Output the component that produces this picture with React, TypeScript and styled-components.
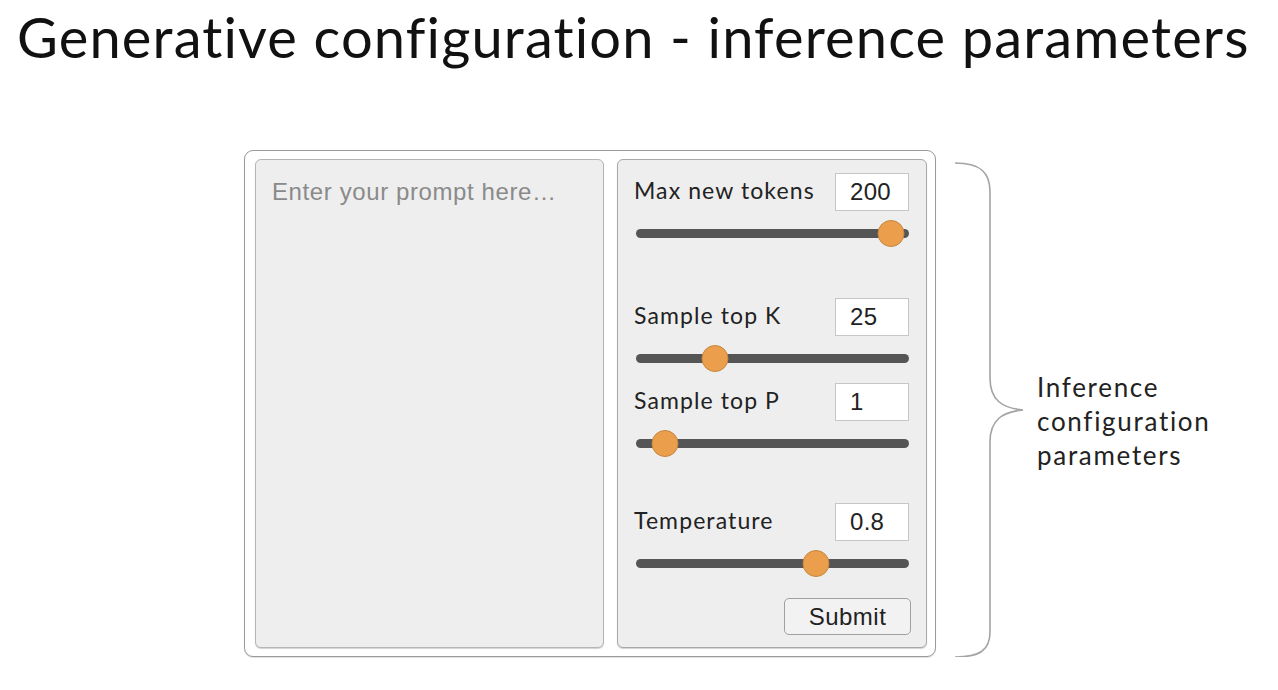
import React from "react";
import styled, { createGlobalStyle } from "styled-components";

const GlobalStyle = createGlobalStyle`
  html, body {
    margin: 0;
    padding: 0;
    background: #ffffff;
  }
  body {
    font-family: Lato, "Noto Sans", sans-serif;
    color: #111;
  }
  * { box-sizing: border-box; }
`;

const Page = styled.div`
  width: 1278px;
  height: 690px;
  overflow: hidden;
  display: flex;
  flex-direction: column;
`;

const Title = styled.h1`
  margin: 0;
  padding: 9px 0 0 17px;
  font-family: Lato, sans-serif;
  font-weight: 400;
  font-size: 56px;
  line-height: 56px;
  letter-spacing: 1.15px;
  font-variant-ligatures: none;
  color: #111;
  white-space: nowrap;
`;

const Stage = styled.div`
  display: flex;
  align-items: stretch;
  margin-top: 85px;
  padding-left: 244px;
`;

const Frame = styled.div`
  width: 692px;
  height: 507px;
  border: 1px solid #9a9a9a;
  border-radius: 9px;
  padding: 8px 8px 9px 10px;
  display: grid;
  grid-template-columns: 349px 1fr;
  column-gap: 13px;
  background: #fff;
  box-shadow: 0 1px 1px rgba(0, 0, 0, 0.12);
`;

const Prompt = styled.textarea`
  display: block;
  width: 100%;
  height: 100%;
  margin: 0;
  resize: none;
  border: 1px solid #b5b5b5;
  border-radius: 6px;
  background: #eeeeee;
  box-shadow: 0 1px 1px rgba(0, 0, 0, 0.18);
  padding: 18px 16px;
  font-family: "Liberation Sans", Arial, sans-serif;
  font-size: 24px;
  line-height: 28px;
  letter-spacing: 0.6px;
  color: #333;
  outline: none;
  &::placeholder {
    color: #8a8a8a;
  }
`;

const Controls = styled.div`
  border: 1px solid #a8a8a8;
  border-radius: 6px;
  background: #eeeeee;
  box-shadow: 0 1px 1px rgba(0, 0, 0, 0.18);
  padding: 13px 17px 12px 16px;
  display: flex;
  flex-direction: column;
`;

const Field = styled.div<{ $space: number }>`
  display: flex;
  flex-direction: column;
  margin-top: ${(p) => p.$space}px;
`;

const FieldHeader = styled.div`
  display: flex;
  align-items: center;
  justify-content: space-between;
  height: 38px;
`;

const Label = styled.label`
  font-family: Lato, sans-serif;
  font-size: 23px;
  line-height: 26px;
  letter-spacing: 1.1px;
  color: #222;
  margin-bottom: 5px;
  white-space: nowrap;
`;

const ValueBox = styled.input`
  width: 74px;
  height: 38px;
  margin: 0;
  border: 1px solid #c6c6c6;
  background: #ffffff;
  padding: 0 0 0 14px;
  font-family: "Liberation Sans", Arial, sans-serif;
  font-size: 24px;
  letter-spacing: 0.3px;
  color: #222;
  outline: none;
`;

const Slider = styled.div`
  position: relative;
  height: 26px;
  margin: 9px 0 0 2px;
  display: flex;
  align-items: center;
`;

const Track = styled.div`
  width: 100%;
  height: 9px;
  border-radius: 5px;
  background: #555555;
`;

const Thumb = styled.div`
  position: absolute;
  top: 0;
  width: 27px;
  height: 27px;
  border-radius: 50%;
  background: #eb9f4c;
  border: 1px solid #c4873f;
  transform: translateX(-50%);
`;

const SubmitButton = styled.button`
  align-self: flex-end;
  margin: 22px -2px 0 0;
  width: 127px;
  height: 37px;
  border: 1px solid #a0a0a0;
  border-radius: 5px;
  background: #f2f2f2;
  font-family: "Liberation Sans", Arial, sans-serif;
  font-size: 24px;
  letter-spacing: 0.5px;
  color: #222;
  padding: 0;
`;

const Annotation = styled.div`
  display: flex;
  align-items: flex-start;
  margin-left: 16px;
`;

const Brace = styled.svg`
  display: block;
  flex: none;
`;

const Note = styled.div`
  margin: 220px 0 0 9px;
  font-family: Lato, sans-serif;
  font-size: 26px;
  line-height: 34px;
  letter-spacing: 1.7px;
  font-variant-ligatures: none;
  color: #222;
  white-space: nowrap;
`;

type Param = { label: string; value: string; pos: number; space: number };

const params: Param[] = [
  { label: "Max new tokens", value: "200", pos: 0.934, space: 0 },
  { label: "Sample top K", value: "25", pos: 0.289, space: 52 },
  { label: "Sample top P", value: "1", pos: 0.106, space: 12 },
  { label: "Temperature", value: "0.8", pos: 0.66, space: 47 },
];

export default function App() {
  return (
    <>
      <GlobalStyle />
      <Page>
        <Title>Generative configuration - inference parameters</Title>
        <Stage>
          <Frame>
            <Prompt placeholder="Enter your prompt here…" />
            <Controls>
              {params.map((p) => (
                <Field key={p.label} $space={p.space}>
                  <FieldHeader>
                    <Label>{p.label}</Label>
                    <ValueBox defaultValue={p.value} readOnly />
                  </FieldHeader>
                  <Slider>
                    <Track />
                    <Thumb style={{ left: `${p.pos * 100}%` }} />
                  </Slider>
                </Field>
              ))}
              <SubmitButton>Submit</SubmitButton>
            </Controls>
          </Frame>
          <Annotation>
            <Brace width="76" height="507" viewBox="0 0 76 507">
              <path
                d="M3 13 C28 13 38 22 38 42 L38 228 C38 250 50 258 71 260 C50 262 38 270 38 292 L38 482 C38 500 28 507 3 507"
                fill="none"
                stroke="#a3a3a3"
                strokeWidth="1.6"
              />
            </Brace>
            <Note>
              Inference
              <br />
              configuration
              <br />
              parameters
            </Note>
          </Annotation>
        </Stage>
      </Page>
    </>
  );
}
